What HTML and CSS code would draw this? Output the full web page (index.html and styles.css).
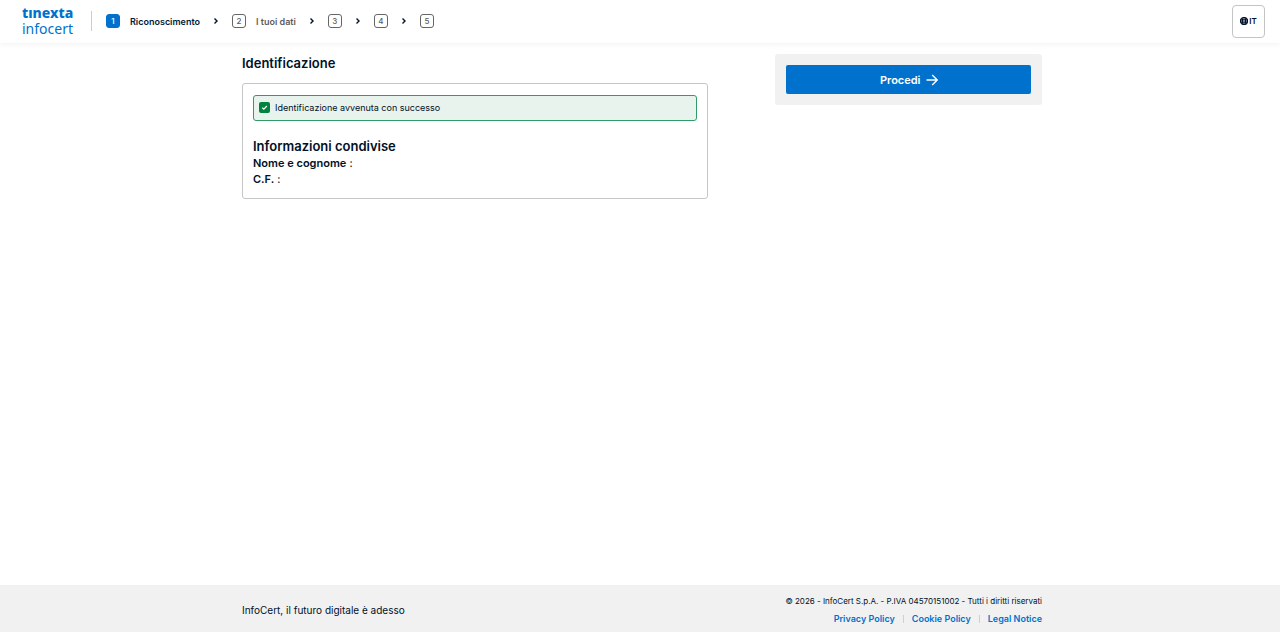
FILE: index.html
```html
<!DOCTYPE html>
<html lang="it">
<head>
<meta charset="utf-8">
<meta name="viewport" content="width=device-width, initial-scale=1">
<title>Identificazione</title>
<link rel="stylesheet" href="styles.css">
</head>
<body>
<header class="header">
  <div class="logo"><span class="logo-top">tınexta</span><br>infocert</div>
  <ol class="steps">
    <li class="step step-active"><span class="step-number">1</span><span class="step-label">Riconoscimento</span></li>
    <li class="chevron" aria-hidden="true"><svg viewBox="0 0 6 8"><path d="M1.5 1.5 4 4 1.5 6.5"/></svg></li>
    <li class="step"><span class="step-number">2</span><span class="step-label">I tuoi dati</span></li>
    <li class="chevron" aria-hidden="true"><svg viewBox="0 0 6 8"><path d="M1.5 1.5 4 4 1.5 6.5"/></svg></li>
    <li class="step"><span class="step-number">3</span></li>
    <li class="chevron" aria-hidden="true"><svg viewBox="0 0 6 8"><path d="M1.5 1.5 4 4 1.5 6.5"/></svg></li>
    <li class="step"><span class="step-number">4</span></li>
    <li class="chevron" aria-hidden="true"><svg viewBox="0 0 6 8"><path d="M1.5 1.5 4 4 1.5 6.5"/></svg></li>
    <li class="step"><span class="step-number">5</span></li>
  </ol>
  <button class="language" type="button"><svg viewBox="0 0 16 16" aria-hidden="true"><circle cx="8" cy="8" r="7"/><ellipse cx="8" cy="8" rx="3.2" ry="7"/><path d="M1 5.6h14M1 10.4h14"/></svg>IT</button>
</header>
<main class="main">
  <div class="container columns">
    <section>
      <h1 class="title">Identificazione</h1>
      <div class="card">
        <div class="alert" role="status"><svg viewBox="0 0 11 11" aria-hidden="true"><rect width="11" height="11" rx="2"/><path d="M3.2 5.6 4.8 7.1 7.9 4"/></svg>Identificazione avvenuta con successo</div>
        <h2 class="subtitle">Informazioni condivise</h2>
        <p class="field"><strong>Nome e cognome</strong> :</p>
        <p class="field"><strong>C.F.</strong> :</p>
      </div>
    </section>
    <aside class="actions">
      <button class="proceed" type="button">Procedi<svg viewBox="0 0 12 12" aria-hidden="true"><path d="M.5 6h10.5M6.2 1 11.2 6l-5 5"/></svg></button>
    </aside>
  </div>
</main>
<footer class="footer">
  <div class="container footer-row">
    <p class="tagline">InfoCert, il futuro digitale è adesso</p>
    <div class="legal">
      <p class="copyright">© 2026 - InfoCert S.p.A. - P.IVA 04570151002 - Tutti i diritti riservati</p>
      <nav class="links"><a href="#">Privacy Policy</a><a href="#">Cookie Policy</a><a href="#">Legal Notice</a></nav>
    </div>
  </div>
</footer>
</body>
</html>
```
FILE: styles.css
```css
* { box-sizing: border-box; }
body {
  display: flex;
  flex-direction: column;
  min-height: 100vh;
  margin: 0;
  color: #001128;
  background: #fff;
  font-family: Inter, "Liberation Sans", sans-serif;
}
h1, h2, p, ol { margin: 0; padding: 0; }
button { font-family: inherit; cursor: pointer; }
svg { flex: none; }

.header {
  display: flex;
  align-items: center;
  height: 43px;
  padding: 0 15px 1px 22px;
  box-shadow: 0 1px 6px #0000000f;
}
.logo {
  width: 70px;
  background: linear-gradient(#ccc, #ccc) right center / 1px 20px no-repeat;
  color: #0072ce;
  font-family: "Noto Sans", sans-serif;
  font-size: 14px;
  line-height: 16px;
  white-space: nowrap;
}
.logo-top { font-weight: 800; }
.steps {
  display: flex;
  align-items: center;
  gap: 13px;
  margin-left: 14px;
  list-style: none;
}
.step {
  display: flex;
  align-items: center;
  gap: 10px;
  color: #5c5c5c;
  font-size: 9px;
  font-weight: 600;
}
.step-number {
  width: 14px;
  height: 14px;
  border: 1px solid #666;
  border-radius: 3px;
  font-size: 8px;
  font-weight: 500;
  line-height: 12px;
  text-align: center;
}
.step-active { color: #001a3a; }
.step-active .step-number { border-color: #0072ce; color: #fff; background: #0072ce; }
.chevron { display: flex; }
.chevron svg { width: 6px; height: 8px; fill: none; stroke: #001128; stroke-width: 1.4; }
.language {
  display: flex;
  align-items: center;
  justify-content: center;
  gap: 1px;
  width: 33px;
  height: 33px;
  margin-left: auto;
  padding: 0;
  border: 1px solid #c4c4c4;
  border-radius: 4px;
  color: #001128;
  background: #fff;
  font-size: 8px;
  font-weight: 600;
}
.language svg { width: 8px; height: 8px; fill: none; stroke: #001128; stroke-width: 2.4; }

.main { flex: 1; padding: 11px 16px 24px 20px; }
.container { max-width: 800px; margin: 0 auto; }
.columns {
  display: grid;
  grid-template-columns: 7fr 4fr;
  gap: 67px;
  align-items: start;
}
.title { font-size: 13px; font-weight: 600; line-height: 18px; }
.card {
  margin-top: 11px;
  padding: 11px 10px;
  border: 1px solid #c6c6c6;
  border-radius: 3px;
}
.alert {
  display: flex;
  align-items: center;
  gap: 5px;
  height: 26px;
  padding: 0 5px 2px;
  border: 1px solid #2f9c68;
  border-radius: 3px;
  background: #e9f3ed;
  font-size: 9px;
}
.alert svg { width: 11px; height: 11px; }
.alert rect { fill: #00843d; }
.alert path { fill: none; stroke: #fff; stroke-width: 1.2; }
.subtitle { margin-top: 16px; font-size: 13px; font-weight: 600; line-height: 18px; }
.field { font-size: 11px; line-height: 16px; }
.field strong { font-weight: 600; }
.actions { padding: 11px; border-radius: 3px; background: #f1f1f1; }
.proceed {
  display: flex;
  align-items: center;
  justify-content: center;
  gap: 5px;
  width: 100%;
  height: 29px;
  padding: 0 6px;
  border: 0;
  border-radius: 2px;
  color: #fff;
  background: #0072ce;
  font-size: 11px;
  font-weight: 600;
}
.proceed svg { width: 12px; height: 12px; fill: none; stroke: #fff; stroke-width: 1.4; }

.footer { padding: 8px 16px 5px 20px; background: #f1f1f1; }
.footer-row { display: flex; align-items: center; justify-content: space-between; }
.tagline { font-size: 10px; }
.legal { text-align: right; }
.copyright { font-size: 8px; line-height: 17px; }
.links { display: flex; justify-content: flex-end; line-height: 17px; }
.links a { color: #0072ce; font-size: 9px; font-weight: 600; text-decoration: none; }
.links a + a {
  margin-left: 8px;
  padding-left: 9px;
  background: linear-gradient(#d0d0d0, #d0d0d0) left center / 1px 8px no-repeat;
}
```
